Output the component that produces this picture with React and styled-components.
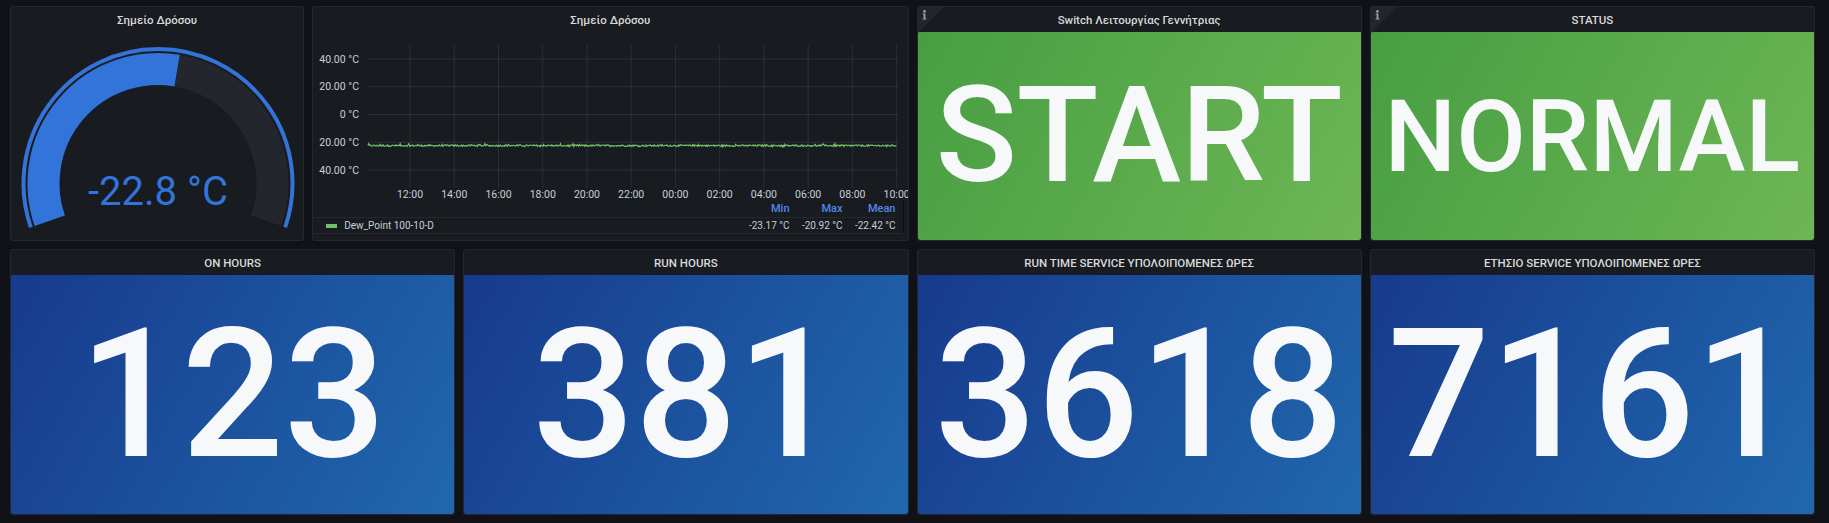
import React from 'react';
import styled, { createGlobalStyle } from 'styled-components';

const GlobalStyle = createGlobalStyle`
  html, body { margin: 0; padding: 0; background: #111217; }
  body { font-family: Roboto, "Noto Sans", "Liberation Sans", sans-serif; color: #d8d9da; }
  * { box-sizing: border-box; }
`;

const Dashboard = styled.div`
  display: grid;
  grid-template-columns: repeat(24, minmax(0, 1fr));
  grid-template-rows: 235px 266px;
  gap: 8px;
  padding: 6px 14px 8px 10px;
  width: 1829px;
  height: 523px;
  overflow: hidden;
`;

const Panel = styled.div`
  grid-column: span ${(p) => p.$span};
  position: relative;
  display: flex;
  flex-direction: column;
  min-width: 0;
  overflow: hidden;
  background: #181b1f;
  border: 1px solid rgba(204, 204, 220, 0.07);
  border-radius: 3px;
`;

const PanelHeader = styled.div`
  flex: none;
  height: 25px;
  display: flex;
  align-items: center;
  justify-content: center;
  font-size: 11.5px;
  font-weight: 500;
  color: #d8d9da;
  white-space: nowrap;
`;

const InfoCorner = styled.div`
  position: absolute;
  top: 0;
  left: 0;
  width: 0;
  height: 0;
  border-top: 26px solid #22252b;
  border-right: 26px solid transparent;
  z-index: 2;
`;

const InfoIcon = styled.svg`
  position: absolute;
  top: 3px;
  left: 4px;
  z-index: 3;
`;

const StatBody = styled.div`
  flex: 1;
  display: flex;
  align-items: center;
  justify-content: center;
  background: linear-gradient(120deg, ${(p) => p.$from}, ${(p) => p.$to});
  color: #f7f8fa;
  font-weight: 500;
  font-size: ${(p) => p.$size}px;
  line-height: 1;
  white-space: nowrap;
  border-radius: 0 0 2px 2px;
`;

const ChartBody = styled.div`
  flex: 1;
  display: flex;
  flex-direction: column;
  min-height: 0;
`;

const PlotSvg = styled.svg`
  display: block;
  overflow: visible;
  flex: none;
`;

const Legend = styled.div`
  display: grid;
  grid-template-columns: 1fr 53px 53px 53px;
  grid-template-rows: 17px 16px;
  margin-right: 4px;
  padding-right: 7px;
  border-right: 1px solid #0e0f12;
  border-bottom: 1px solid #24272c;
`;

const LegendHead = styled.div`
  display: flex;
  align-items: center;
  justify-content: flex-end;
  font-size: 11px;
  font-weight: 500;
  color: #5189e8;
`;

const LegendCell = styled.div`
  display: flex;
  align-items: center;
  justify-content: ${(p) => (p.$left ? 'flex-start' : 'flex-end')};
  padding-left: ${(p) => (p.$left ? '13px' : '0')};
  gap: 7px;
  font-size: 10px;
  color: #c7d0d9;
  border-top: 1px solid #24272c;
  white-space: nowrap;
`;

const Swatch = styled.span`
  display: inline-block;
  width: 11px;
  height: 4px;
  background: #73bf69;
`;

const BLUE = '#3274d9';

function polar(cx, cy, r, deg) {
  const a = (deg * Math.PI) / 180;
  return [cx + r * Math.sin(a), cy - r * Math.cos(a)];
}

function arcPath(cx, cy, r, a0, a1) {
  const [x0, y0] = polar(cx, cy, r, a0);
  const [x1, y1] = polar(cx, cy, r, a1);
  const large = a1 - a0 > 180 ? 1 : 0;
  return `M ${x0.toFixed(2)} ${y0.toFixed(2)} A ${r} ${r} 0 ${large} 1 ${x1.toFixed(2)} ${y1.toFixed(2)}`;
}

function Gauge() {
  const cx = 147;
  const cy = 151.5;
  const a0 = -109;
  const a1 = 109;
  const frac = (-22.8 + 50) / 50;
  const av = a0 + (a1 - a0) * frac;
  return (
    <svg width="292" height="208" viewBox="0 0 292 208">
      <path d={arcPath(cx, cy, 134.5, a0, a1)} stroke={BLUE} strokeWidth="4" fill="none" />
      <path d={arcPath(cx, cy, 114.5, av, a1)} stroke="#23262c" strokeWidth="32" fill="none" />
      <path d={arcPath(cx, cy, 114.5, a0, av)} stroke={BLUE} strokeWidth="32" fill="none" />
      <text
        x={cx}
        y="173"
        textAnchor="middle"
        fill={BLUE}
        fontSize="40"
        fontFamily="Roboto, sans-serif"
      >
        -22.8 °C
      </text>
    </svg>
  );
}

function makeSeries() {
  let seed = 12345;
  const rnd = () => {
    seed = (seed * 1103515245 + 12345) % 2147483648;
    return seed / 2147483648;
  };
  const pts = [];
  const x0 = 55;
  const x1 = 584;
  const yv = (v) => 82.5 - v * 1.3875;
  for (let x = x0; x <= x1; x += 0.7) {
    let v = -22.42 + (rnd() - 0.5) * 1.1;
    const r = rnd();
    if (r > 0.985) v = -20.92 - rnd() * 0.3;
    else if (r > 0.95) v = -21.6;
    else if (r < 0.012) v = -23.17;
    pts.push(`${x.toFixed(1)},${yv(v).toFixed(2)}`);
  }
  return pts.join(' ');
}

const SERIES = makeSeries();

function Graph() {
  const yTicks = [
    { y: 27, t: '40.00 °C' },
    { y: 54.75, t: '20.00 °C' },
    { y: 82.5, t: '0 °C' },
    { y: 110.25, t: '20.00 °C' },
    { y: 138, t: '40.00 °C' },
  ];
  const xTicks = ['12:00', '14:00', '16:00', '18:00', '20:00', '22:00', '00:00', '02:00', '04:00', '06:00', '08:00', '10:00'];
  const grid = 'rgba(204,204,220,0.11)';
  return (
    <PlotSvg width="592" height="168" viewBox="0 0 592 168">
      {xTicks.map((t, i) => {
        const x = 97 + i * 44.24;
        return <line key={'v' + i} x1={x} x2={x} y1="13" y2="156" stroke={grid} strokeWidth="1" />;
      })}
      {yTicks.map((t, i) => (
        <line key={'h' + i} x1="54" x2="585" y1={t.y} y2={t.y} stroke={grid} strokeWidth="1" />
      ))}
      {yTicks.map((t, i) => (
        <text key={'yl' + i} x="46" y={t.y + 3.7} textAnchor="end" fontSize="10.5" fill="#c7d0d9" fontFamily="Roboto, sans-serif">
          {t.t}
        </text>
      ))}
      {xTicks.map((t, i) => (
        <text key={'xl' + i} x={97 + i * 44.24} y="166" textAnchor="middle" fontSize="10.5" fill="#c7d0d9" fontFamily="Roboto, sans-serif">
          {t}
        </text>
      ))}
      <polyline points={SERIES} fill="none" stroke="#73bf69" strokeWidth="1.2" />
    </PlotSvg>
  );
}

function Info() {
  return (
    <>
      <InfoCorner />
      <InfoIcon width="5" height="10" viewBox="0 0 5 10">
        <circle cx="2.5" cy="1.4" r="1.3" fill="#9fa2a8" />
        <path d="M0.6 3.6 H3.4 V8.6 H4.4 V9.6 H0.6 V8.6 H1.6 V4.6 H0.6 Z" fill="#9fa2a8" />
      </InfoIcon>
    </>
  );
}

const GREEN_FROM = '#479e42';
const GREEN_TO = '#6db655';
const BLUE_FROM = '#173a8c';
const BLUE_TO = '#2068ae';

const bottomStats = [
  { title: 'ON HOURS', value: '123' },
  { title: 'RUN HOURS', value: '381' },
  { title: 'RUN TIME SERVICE ΥΠΟΛΟΙΠΟΜΕΝΕΣ ΩΡΕΣ', value: '3618' },
  { title: 'ΕΤΗΣΙΟ SERVICE ΥΠΟΛΟΙΠΟΜΕΝΕΣ ΩΡΕΣ', value: '7161' },
];

export default function App() {
  return (
    <>
      <GlobalStyle />
      <Dashboard>
        <Panel $span={4}>
          <PanelHeader>Σημείο Δρόσου</PanelHeader>
          <ChartBody>
            <Gauge />
          </ChartBody>
        </Panel>
        <Panel $span={8}>
          <PanelHeader>Σημείο Δρόσου</PanelHeader>
          <ChartBody>
            <Graph />
            <Legend>
              <div />
              <LegendHead>Min</LegendHead>
              <LegendHead>Max</LegendHead>
              <LegendHead>Mean</LegendHead>
              <LegendCell $left>
                <Swatch />
                Dew_Point 100-10-D
              </LegendCell>
              <LegendCell>-23.17 °C</LegendCell>
              <LegendCell>-20.92 °C</LegendCell>
              <LegendCell>-22.42 °C</LegendCell>
            </Legend>
          </ChartBody>
        </Panel>
        <Panel $span={6}>
          <Info />
          <PanelHeader>Switch Λειτουργίας Γεννήτριας</PanelHeader>
          <StatBody $from={GREEN_FROM} $to={GREEN_TO} $size={134}>
            START
          </StatBody>
        </Panel>
        <Panel $span={6}>
          <Info />
          <PanelHeader>STATUS</PanelHeader>
          <StatBody $from={GREEN_FROM} $to={GREEN_TO} $size={101}>
            NORMAL
          </StatBody>
        </Panel>
        {bottomStats.map((s) => (
          <Panel $span={6} key={s.title}>
            <PanelHeader>{s.title}</PanelHeader>
            <StatBody $from={BLUE_FROM} $to={BLUE_TO} $size={180}>
              {s.value}
            </StatBody>
          </Panel>
        ))}
      </Dashboard>
    </>
  );
}
